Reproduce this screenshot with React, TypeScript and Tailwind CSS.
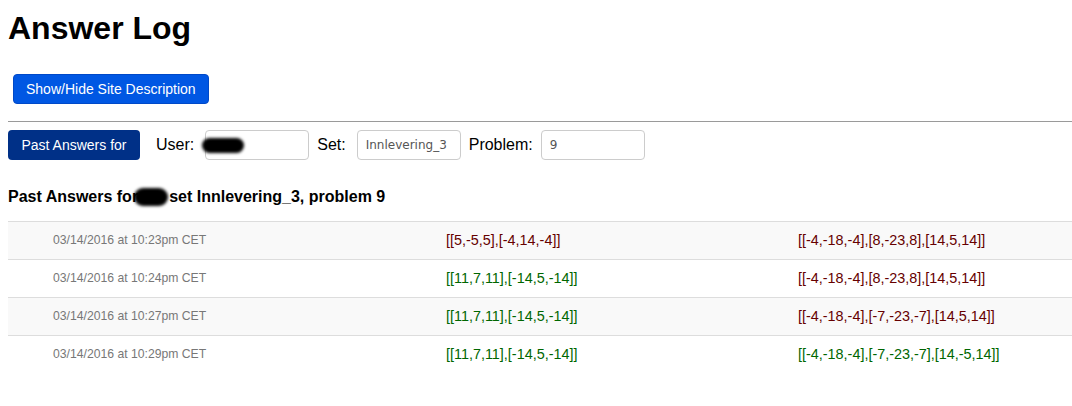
const rows = [
  { time: '03/14/2016 at 10:23pm CET', a: '[[5,-5,5],[-4,14,-4]]', aOk: false, b: '[[-4,-18,-4],[8,-23,8],[14,5,14]]', bOk: false },
  { time: '03/14/2016 at 10:24pm CET', a: '[[11,7,11],[-14,5,-14]]', aOk: true, b: '[[-4,-18,-4],[8,-23,8],[14,5,14]]', bOk: false },
  { time: '03/14/2016 at 10:27pm CET', a: '[[11,7,11],[-14,5,-14]]', aOk: true, b: '[[-4,-18,-4],[-7,-23,-7],[14,5,14]]', bOk: false },
  { time: '03/14/2016 at 10:29pm CET', a: '[[11,7,11],[-14,5,-14]]', aOk: true, b: '[[-4,-18,-4],[-7,-23,-7],[14,-5,14]]', bOk: true },
];

function Blob({ className }: { className: string }) {
  // redacted user name scribble
  return <span className={`inline-block rounded-full bg-black blur-[1.5px] ${className}`} />;
}

export default function App() {
  return (
    <div className="min-h-[406px] bg-white pl-2 font-['Liberation_Sans',Arial,sans-serif] text-black">
      <h1 className="pt-[9px] text-[32px] font-bold leading-[38px]">Answer Log</h1>

      <div className="pl-[5px] pt-[27px]">
        <button className="h-[30px] rounded-[4px] border border-[#0049c8] bg-[#0057e3] px-[12px] text-[14px] text-white">
          Show/Hide Site Description
        </button>
      </div>

      <hr className="mt-[17px] border-t border-[#9a9a9a]" />

      {/* Filter form */}
      <div className="mt-[8px] flex items-center text-[16px]">
        <button className="h-[30px] w-[132px] rounded-[4px] bg-[#003087] text-[14px] text-white">
          Past Answers for
        </button>
        <span className="ml-[16px]">User:</span>
        <div className="ml-[11px] flex h-[30px] w-[104px] items-center rounded-[4px] border border-[#cccccc]">
          <Blob className="-ml-[4px] h-[15px] w-[42px]" />
        </div>
        <span className="ml-[8px]">Set:</span>
        <div className="ml-[11px] flex h-[30px] w-[104px] items-center rounded-[4px] border border-[#cccccc] pl-[8px] font-['DejaVu_Sans',sans-serif] text-[12px] text-[#555555]">
          Innlevering_3
        </div>
        <span className="ml-[8px]">Problem:</span>
        <div className="ml-[8px] flex h-[30px] w-[104px] items-center rounded-[4px] border border-[#cccccc] pl-[8px] font-['DejaVu_Sans',sans-serif] text-[12px] text-[#555555]">
          9
        </div>
      </div>

      <h2 className="mt-[26px] flex items-center text-[16px] font-bold leading-[22px]">
        Past Answers for
        <Blob className="-ml-[4px] h-[18px] w-[34px]" />
        <span className="ml-[1px]">set Innlevering_3, problem 9</span>
      </h2>

      {/* Answer table */}
      <div className="mt-[13px]">
        {rows.map((r, i) => (
          <div
            key={i}
            className={`grid h-[38px] grid-cols-[438px_352px_1fr] items-center border-t border-[#dddddd] text-[14.4px] ${i % 2 === 0 ? 'bg-[#f9f9f9]' : 'bg-white'}`}
          >
            <div className="pl-[45px] text-[12.2px] text-[#777777]">{r.time}</div>
            <div className={r.aOk ? 'text-[#006600]' : 'text-[#660000]'}>{r.a}</div>
            <div className={r.bOk ? 'text-[#006600]' : 'text-[#660000]'}>{r.b}</div>
          </div>
        ))}
      </div>
    </div>
  );
}
